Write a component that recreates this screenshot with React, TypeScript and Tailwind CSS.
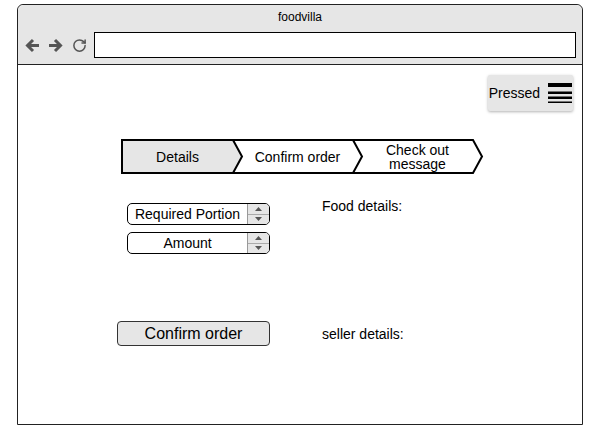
import { RotateCw } from "lucide-react";

const font = { fontFamily: '"Liberation Sans", Arial, sans-serif' };

function Spinner({ label }: { label: string }) {
  return (
    <div className="flex h-[22px] w-[143px] overflow-hidden rounded-[5px] border border-black bg-white">
      <div className="flex flex-1 items-center justify-center text-[14px] leading-4 text-black">{label}</div>
      <div className="flex w-[22px] flex-col border-l border-[#999] bg-[#e6e6e6]">
        <div className="flex flex-1 items-center justify-center border-b border-[#aaa]">
          <svg width="7" height="4" viewBox="0 0 7 4">
            <path d="M0 4 L3.5 0 L7 4 Z" fill="#555" />
          </svg>
        </div>
        <div className="flex flex-1 items-center justify-center">
          <svg width="7" height="4" viewBox="0 0 7 4">
            <path d="M0 0 L3.5 4 L7 0 Z" fill="#555" />
          </svg>
        </div>
      </div>
    </div>
  );
}

function Breadcrumb() {
  return (
    <div className="relative h-[35px] w-[363px]">
      <svg className="absolute inset-0" width="363" height="35" viewBox="0 0 363 35">
        <path d="M1 1 H112 L121 17.5 L112 34 H1 Z" fill="#e6e6e6" />
        <path d="M1 1 H352 L361 17.5 L352 34 H1 Z" fill="none" stroke="#000" strokeWidth="2" />
        <path d="M112 1 L121 17.5 L112 34" fill="none" stroke="#000" strokeWidth="2" />
        <path d="M232 1 L241 17.5 L232 34" fill="none" stroke="#000" strokeWidth="2" />
      </svg>
      <div className="relative flex h-full items-center text-[14px] text-black">
        <span className="ml-[1px] w-[111px] text-center leading-4">Details</span>
        <span className="ml-[9px] w-[111px] text-center leading-4">Confirm order</span>
        <span className="ml-[9px] w-[111px] text-center leading-[14px]">
          Check out
          <br />
          message
        </span>
      </div>
    </div>
  );
}

export default function App() {
  return (
    <div className="h-[438px] w-[595px] bg-white pt-[4px]" style={font}>
      <div className="ml-[17px] flex h-[421px] w-[566px] flex-col rounded-t-[6px] border border-[#222]">
        {/* browser header */}
        <div className="h-[60px] rounded-t-[6px] border-b border-[#222] bg-[#e6e6e6] pt-[5px]">
          <div className="text-center text-[12px] leading-[14px] text-black">foodvilla</div>
          <div className="mt-[8px] flex items-center pl-[7px] pr-[6px]">
            <svg width="15" height="15" viewBox="0 0 15 15" fill="none" stroke="#555" strokeWidth="3">
              <path d="M14 7.5 H2.5" />
              <path d="M8 2 L2.5 7.5 L8 13" />
            </svg>
            <svg className="ml-[8px]" width="15" height="15" viewBox="0 0 15 15" fill="none" stroke="#555" strokeWidth="3">
              <path d="M1 7.5 H12.5" />
              <path d="M7 2 L12.5 7.5 L7 13" />
            </svg>
            <RotateCw className="ml-[9px]" size={15} strokeWidth={2.4} color="#555" />
            <div className="ml-[7px] h-[26px] flex-1 border border-black bg-white" />
          </div>
        </div>

        {/* page body */}
        <div className="flex-1">
          <div className="flex justify-end pr-[9px] pt-[10px]">
            <div className="flex h-[36px] items-center gap-[8px] rounded-[2px] bg-[#e6e6e6] pl-[1px] pr-[1px] shadow-[0_1px_3px_rgba(0,0,0,0.3)]">
              <span className="text-[14px] leading-4 text-black">Pressed</span>
              <svg width="24" height="20" viewBox="0 0 24 20" fill="#000">
                <rect x="0" y="0" width="24" height="4" />
                <rect x="0" y="8.5" width="24" height="2.5" />
                <rect x="0" y="13.5" width="24" height="2.5" />
                <rect x="0" y="18.5" width="24" height="1.5" />
              </svg>
            </div>
          </div>

          <div className="ml-[103px] mt-[28px]">
            <Breadcrumb />
          </div>

          <div className="ml-[99px] mt-[24px] flex items-start">
            <div className="w-[153px] pl-[10px] pt-[5px]">
              <Spinner label="Required Portion" />
              <div className="mt-[7px]">
                <Spinner label="Amount" />
              </div>
            </div>
            <div className="ml-[52px] text-[14px] leading-4 text-black">Food details:</div>
          </div>

          <div className="ml-[99px] mt-[67px] flex items-center">
            <button className="h-[25px] w-[153px] rounded-[4px] border border-[#333] bg-[#e6e6e6] text-[16px] leading-5 text-black">
              Confirm order
            </button>
            <div className="ml-[52px] text-[14px] leading-4 text-black">seller details:</div>
          </div>
        </div>
      </div>
    </div>
  );
}
